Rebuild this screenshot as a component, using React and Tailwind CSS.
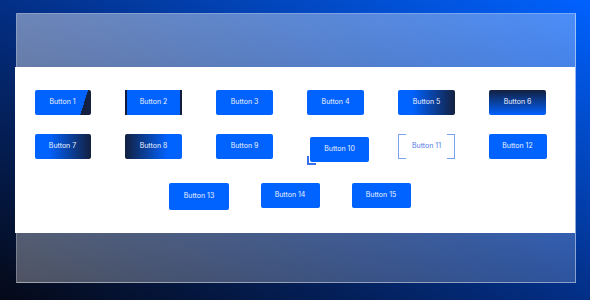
import React from 'react';

const base =
  'h-[25px] w-[56px] flex items-center justify-center text-[7px] text-[#eef2ff] rounded-[2px]';

function Cell({ children }) {
  return <div className="w-[91px] flex justify-center">{children}</div>;
}

function Bracket({ children }) {
  return (
    <div className="relative h-[25px] w-[57px] flex items-center justify-center text-[7px] text-[#4f7ae8]">
      <span className="absolute left-0 top-0 h-full w-[8px] border-y border-l border-[#7aa0f0] rounded-l-[1px]" />
      <span className="absolute right-0 top-0 h-full w-[8px] border-y border-r border-[#7aa0f0] rounded-r-[1px]" />
      {children}
    </div>
  );
}

export default function App() {
  return (
    <div
      className="w-[590px] h-[300px] pt-[13px] pl-[16px] bg-[linear-gradient(to_top_right,#050917_0%,#032f86_50%,#0062ff_100%)]"
      style={{ fontFamily: 'Inter, "Open Sans", sans-serif' }}
    >
      <div className="w-[560px] h-[270px] flex flex-col border border-white/35 bg-[linear-gradient(to_bottom_right,rgba(255,255,255,0.42),rgba(255,255,255,0.17))]">
        <div className="h-[53px]" />
        <div className="-ml-[2px] w-[560px] h-[166px] bg-white pt-[23px]">
          <div className="ml-[2px] w-[546px]">
            <div className="flex">
              <Cell>
                <div className={`${base} bg-[linear-gradient(108deg,#0062ff_83%,#14203f_83%)]`}>Button 1</div>
              </Cell>
              <Cell>
                <div className={`${base} w-[57px] bg-[#0062ff] border-x-2 border-[#111c3d] rounded-none`}>Button 2</div>
              </Cell>
              <Cell>
                <div className={`${base} w-[57px] bg-[#0062ff]`}>Button 3</div>
              </Cell>
              <Cell>
                <div className={`${base} w-[57px] bg-[#0062ff]`}>Button 4</div>
              </Cell>
              <Cell>
                <div className={`${base} w-[57px] bg-[linear-gradient(to_right,#0062ff_25%,#13203f_100%)]`}>Button 5</div>
              </Cell>
              <Cell>
                <div className={`${base} w-[57px] bg-[linear-gradient(to_bottom,#14203f_0%,#0062ff_100%)]`}>Button 6</div>
              </Cell>
            </div>
            <div className="flex mt-[19px]">
              <Cell>
                <div className={`${base} bg-[linear-gradient(to_right,#0062ff_25%,#13203f_100%)]`}>Button 7</div>
              </Cell>
              <Cell>
                <div className={`${base} w-[57px] bg-[linear-gradient(to_right,#13203f_0%,#0062ff_75%)]`}>Button 8</div>
              </Cell>
              <Cell>
                <div className={`${base} w-[57px] bg-[#0062ff]`}>Button 9</div>
              </Cell>
              <Cell>
                <div className="relative h-[25px] w-[57px]">
                  <span className="absolute left-0 top-[22px] h-[9px] w-[9px] border-l-2 border-b-2 border-[#3a6ee8]" />
                  <div className={`${base} absolute left-[3px] top-[3px] w-[59px] bg-[#0062ff]`}>Button 10</div>
                </div>
              </Cell>
              <Cell>
                <Bracket>Button 11</Bracket>
              </Cell>
              <Cell>
                <div className={`${base} w-[58px] bg-[#0062ff]`}>Button 12</div>
              </Cell>
            </div>
            <div className="flex justify-center mt-[24px]">
              <Cell>
                <div className={`${base} w-[60px] h-[27px] bg-[#0062ff]`}>Button 13</div>
              </Cell>
              <Cell>
                <div className={`${base} w-[59px] bg-[#0062ff]`}>Button 14</div>
              </Cell>
              <Cell>
                <div className={`${base} w-[59px] bg-[#0062ff]`}>Button 15</div>
              </Cell>
            </div>
          </div>
        </div>
      </div>
    </div>
  );
}
